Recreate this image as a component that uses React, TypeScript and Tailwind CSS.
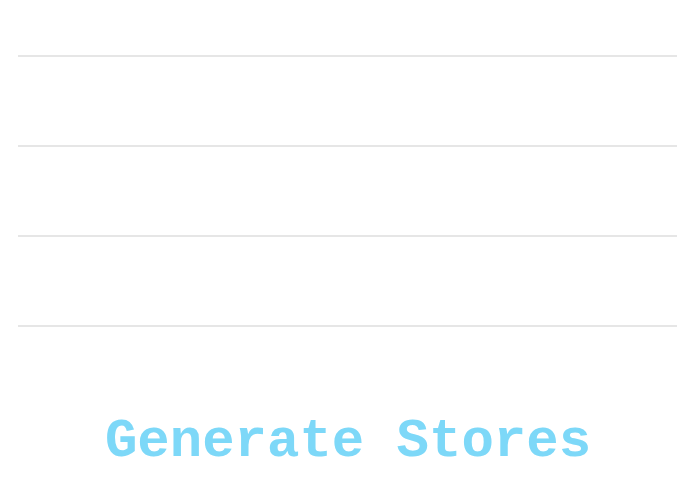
const rows = [0, 1, 2];

export default function App() {
  return (
    <div className="w-[695px] h-[494px] bg-white px-[18px]">
      <div className="h-[57px] border-b-2 border-[#e6e6e6]" />
      {rows.map((r) => (
        <div key={r} className="h-[90px] border-b-2 border-[#e6e6e6]" />
      ))}
      <div className="flex justify-center pt-[88px] pl-[1px]">
        <button
          className="text-[54px] leading-none font-bold text-[#7dd8f8]"
          style={{ fontFamily: '"Liberation Mono", "Courier New", monospace' }}
        >
          Generate Stores
        </button>
      </div>
    </div>
  );
}
